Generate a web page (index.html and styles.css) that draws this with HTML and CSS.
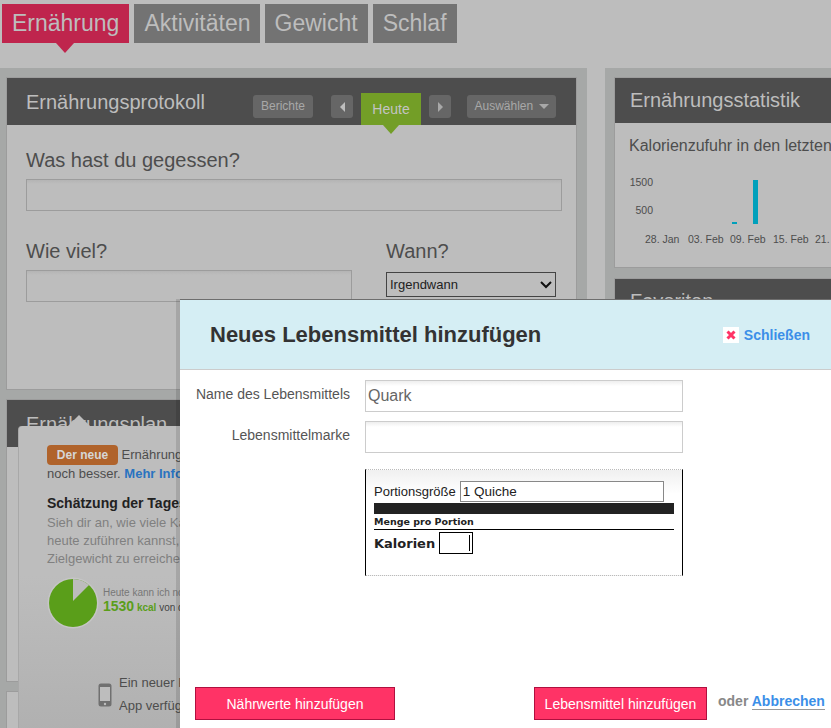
FILE: index.html
```html
<!DOCTYPE html>
<html lang="de">
<head>
    <meta charset="UTF-8">
    <meta name="viewport" content="width=device-width, initial-scale=1.0">
    <title>Neues Lebensmittel hinzufügen</title>
    <link rel="stylesheet" href="styles.css">
</head>
<body>
    <!-- Hauptnavigation -->
    <nav class="tabs">
        <a class="tab active">Ernährung</a>
        <a class="tab activities">Aktivitäten</a>
        <a class="tab">Gewicht</a>
        <a class="tab">Schlaf</a>
    </nav>

    <div class="columns">
        <div class="col-left">
            <section class="panel panel-log">
                <div class="panel-head">
                    <h2>Ernährungsprotokoll</h2>
                    <a class="head-btn reports">Berichte</a>
                    <a class="head-btn arrow-btn prev"><span class="tri-left"></span></a>
                    <a class="today">Heute</a>
                    <a class="head-btn arrow-btn next"><span class="tri-right"></span></a>
                    <a class="head-btn choose">Auswählen <span class="tri-down"></span></a>
                </div>
                <div class="panel-body">
                    <label class="big-label">Was hast du gegessen?</label>
                    <input class="dim-input" type="text">
                    <div class="log-row">
                        <div class="log-amount">
                            <label class="big-label">Wie viel?</label>
                            <input class="dim-input" type="text">
                        </div>
                        <div class="log-when">
                            <label class="big-label">Wann?</label>
                            <select class="when-select">
                                <option>Irgendwann</option>
                            </select>
                        </div>
                    </div>
                </div>
            </section>

            <section class="panel panel-plan">
                <div class="panel-head">
                    <h2>Ernährungsplan</h2>
                </div>
                <!-- Hinweis über dem Plan -->
                <div class="tip">
                    <p class="tip-intro"><span class="badge">Der neue</span> Ernährungsplan ist jetzt<br>noch besser. <a class="tip-link">Mehr Infos</a></p>
                    <h4>Schätzung der Tagesenergie</h4>
                    <p class="tip-text">Sieh dir an, wie viele Kalorien du<br>heute zuführen kannst, um dein<br>Zielgewicht zu erreichen.</p>
                    <div class="tip-pie">
                        <svg width="52" height="52" viewBox="0 0 52 52">
                            <circle cx="26" cy="26" r="25.5" fill="#c6c6c6"/>
                            <circle cx="26" cy="26" r="24" fill="#5a9e1a"/>
                            <path d="M26 24 L26 2 A24 24 0 0 1 42 8 Z" fill="#bcbcbc"/>
                        </svg>
                        <div class="pie-text">
                            <div class="pie-small">Heute kann ich noch</div>
                            <div class="pie-line"><b class="pie-num">1530</b> <b class="pie-unit">kcal</b> von deinem Ziel</div>
                        </div>
                    </div>
                    <div class="tip-app">
                        <svg width="14" height="24" viewBox="0 0 14 24">
                            <rect x="0.5" y="0.5" width="13" height="23" rx="2.5" fill="#707070"/>
                            <rect x="2" y="4" width="10" height="14" fill="#bdbdbd"/>
                            <circle cx="7" cy="21" r="1.2" fill="#bdbdbd"/>
                        </svg>
                        <p>Ein neuer Plan<br>App verfügbar</p>
                    </div>
                </div>
            </section>

            <section class="panel panel-last"></section>
        </div>

        <div class="col-right">
            <section class="panel panel-stats">
                <div class="panel-head short">
                    <h2>Ernährungsstatistik</h2>
                </div>
                <p class="stats-title">Kalorienzufuhr in den letzten 30 Tagen</p>
                <svg class="chart" width="217" height="85" viewBox="0 0 217 85">
                    <text x="38" y="22" text-anchor="end">1500</text>
                    <text x="38" y="50" text-anchor="end">500</text>
                    <rect x="117" y="58" width="5" height="2" fill="#00a0bb"/>
                    <rect x="138" y="16" width="5" height="44" fill="#00a0bb"/>
                    <text x="30" y="79">28. Jan</text>
                    <text x="73" y="79">03. Feb</text>
                    <text x="115" y="79">09. Feb</text>
                    <text x="158" y="79">15. Feb</text>
                    <text x="200" y="79">21. Feb</text>
                </svg>
            </section>
            <section class="panel panel-fav">
                <div class="panel-head short">
                    <h2>Favoriten</h2>
                </div>
            </section>
        </div>
    </div>

    <!-- Dialog -->
    <div class="dialog">
        <div class="dialog-head">
            <h1>Neues Lebensmittel hinzufügen</h1>
            <a class="close">
                <span class="close-icon">
                    <svg width="10" height="10" viewBox="0 0 10 10"><path d="M1.5 1.5 L8.5 8.5 M8.5 1.5 L1.5 8.5" stroke="#ff3366" stroke-width="3"/></svg>
                </span>
                Schließen
            </a>
        </div>
        <div class="dialog-body">
            <div class="field">
                <label>Name des Lebensmittels</label>
                <input type="text" value="Quark">
            </div>
            <div class="field">
                <label>Lebensmittelmarke</label>
                <input type="text">
            </div>
            <div class="facts">
                <div class="facts-size">
                    <label>Portionsgröße</label>
                    <input type="text" value="1 Quiche">
                </div>
                <div class="facts-bar"></div>
                <div class="facts-per">Menge pro Portion</div>
                <div class="facts-cal">
                    <label>Kalorien</label>
                    <input type="text">
                </div>
            </div>
        </div>
        <div class="dialog-foot">
            <button class="pink-btn wide">Nährwerte hinzufügen</button>
            <button class="pink-btn save">Lebensmittel hinzufügen</button>
            <span class="or">oder <a class="cancel">Abbrechen</a></span>
        </div>
    </div>
</body>
</html>
```

FILE: styles.css
```css
html, body {
    height: 728px;
    overflow: hidden;
}

body {
    margin: 0;
    background-color: #bdbdbd;
    font-family: "Liberation Sans", Arial, sans-serif;
    position: relative;
}

/* Navigation */
.tabs {
    display: flex;
    gap: 5px;
    height: 64px;
    padding: 4px 0 0 2px;
}

.tab {
    position: relative;
    height: 39px;
    line-height: 38px;
    padding: 0 10px;
    background-color: #737373;
    color: #bdbdbd;
    font-size: 23px;
}

.tab.activities {
    padding-right: 9px;
}

.tab.active {
    background-color: #bf254d;
}

.tab.active::after {
    content: "";
    position: absolute;
    left: 54px;
    top: 39px;
    border-left: 9px solid transparent;
    border-right: 9px solid transparent;
    border-top: 10px solid #bf254d;
}

/* Spalten */
.columns {
    display: flex;
    gap: 18px;
    height: 660px;
}

.col-left {
    width: 571px;
    flex-shrink: 0;
    padding: 9px 10px 0 6px;
    background-color: #a6a8a7;
}

.col-right {
    flex: 1;
    min-width: 0;
    padding: 9px 0 0 9px;
    background-color: #a6a8a7;
}

.panel {
    position: relative;
    border: 1px solid #9c9c9c;
    background-color: #bdbdbd;
    margin-bottom: 10px;
    box-sizing: border-box;
}

.panel-log {
    height: 313px;
    margin-bottom: 9px;
}

.panel-plan {
    height: 283px;
    margin-bottom: 9px;
    z-index: 1;
}

.panel-last {
    height: 80px;
}

.panel-stats {
    height: 191px;
}

.panel-fav {
    height: 120px;
}

.panel-stats,
.panel-fav {
    margin-right: -40px;
}

.panel-head {
    display: flex;
    align-items: flex-start;
    height: 47px;
    padding-left: 19px;
    background-color: #4d4d4d;
    box-sizing: border-box;
}

.panel-head.short {
    height: 45px;
    padding-left: 15px;
}

.panel-head h2 {
    margin: 0;
    padding-top: 12px;
    font-size: 20px;
    font-weight: normal;
    line-height: 24px;
    color: #bdbdbd;
    white-space: nowrap;
}

.panel-head.short h2 {
    padding-top: 10px;
}

.head-btn {
    display: block;
    height: 23px;
    margin-top: 17px;
    line-height: 23px;
    background-color: #666;
    border-radius: 3px;
    color: #a8a8a8;
    font-size: 12px;
    text-align: center;
    box-sizing: border-box;
}

.reports {
    width: 60px;
    margin-left: 48px;
}

.arrow-btn {
    display: flex;
    align-items: center;
    justify-content: center;
    width: 22px;
}

.prev {
    margin-left: 18px;
}

.next {
    margin-left: 8px;
}

.choose {
    width: 89px;
    margin-left: 16px;
}

.tri-left,
.tri-right {
    border-top: 5px solid transparent;
    border-bottom: 5px solid transparent;
}

.tri-left {
    border-right: 5px solid #bdbdbd;
}

.tri-right {
    border-left: 5px solid #a8a8a8;
}

.tri-down {
    display: inline-block;
    margin-left: 2px;
    vertical-align: 1px;
    border-left: 5px solid transparent;
    border-right: 5px solid transparent;
    border-top: 5px solid #a8a8a8;
}

.today {
    position: relative;
    width: 60px;
    height: 32px;
    margin: 15px 0 0 8px;
    line-height: 33px;
    background-color: #739e27;
    color: #c4c4c4;
    font-size: 14px;
    text-align: center;
}

.today::after {
    content: "";
    position: absolute;
    left: 22px;
    top: 32px;
    border-left: 8px solid transparent;
    border-right: 8px solid transparent;
    border-top: 9px solid #739e27;
}

.panel-body {
    padding: 23px 14px 0 19px;
}

.big-label {
    display: block;
    color: #4d4d4d;
    font-size: 20px;
    line-height: 24px;
}

.dim-input {
    display: block;
    width: 100%;
    height: 32px;
    margin-top: 7px;
    border: 1px solid #9c9c9c;
    background: linear-gradient(#b4b4b4, #bdbdbd 4px);
    box-sizing: border-box;
}

.log-row {
    display: flex;
    margin-top: 28px;
}

.log-amount {
    width: 326px;
}

.log-when {
    margin-left: 34px;
    width: 170px;
}

.when-select {
    display: block;
    width: 170px;
    height: 25px;
    margin-top: 9px;
    padding-left: 3px;
    border: 1px solid #444;
    border-radius: 0;
    appearance: none;
    background: #bdbdbd url("data:image/svg+xml,%3Csvg xmlns='http://www.w3.org/2000/svg' width='12' height='8'%3E%3Cpath d='M1 1 L6 6 L11 1' fill='none' stroke='%23111' stroke-width='2'/%3E%3C/svg%3E") no-repeat right 3px center;
    color: #222;
    font-family: "Liberation Sans", Arial, sans-serif;
    font-size: 13px;
}

/* Hinweis */
.tip {
    position: absolute;
    left: 11px;
    top: 26px;
    width: 540px;
    height: 320px;
    padding: 19px 0 0 28px;
    border-radius: 4px 0 0 0;
    border-left: 1px solid #a8a8a8;
    background: linear-gradient(#bdbdbd, #bdbdbd 150px, #afafaf);
    box-sizing: border-box;
    color: #4d4d4d;
    font-size: 13px;
}

.tip::before {
    content: "";
    position: absolute;
    left: 49px;
    top: -11px;
    border-left: 11px solid transparent;
    border-right: 11px solid transparent;
    border-bottom: 11px solid #bdbdbd;
}

.tip-intro {
    margin: 0;
    line-height: 17px;
    white-space: nowrap;
}

.badge {
    display: inline-block;
    width: 71px;
    height: 20px;
    line-height: 20px;
    border-radius: 4px;
    background-color: #b0632b;
    color: #d6d6d6;
    font-size: 12px;
    font-weight: bold;
    text-align: center;
}

.tip-link {
    color: #2a73c0;
    font-weight: bold;
}

.tip h4 {
    margin: 12px 0 0;
    color: #222;
    font-size: 14px;
    line-height: 18px;
}

.tip-text {
    margin: 2px 0 0;
    color: #808080;
    line-height: 18px;
    white-space: nowrap;
}

.tip-pie {
    display: flex;
    align-items: flex-start;
    gap: 4px;
    margin-top: 9px;
}

.pie-text {
    padding-top: 10px;
    white-space: nowrap;
}

.pie-small {
    color: #777;
    font-size: 10px;
    line-height: 12px;
}

.pie-line {
    color: #444;
    font-size: 10px;
    line-height: 14px;
}

.pie-num {
    color: #5a9e1a;
    font-size: 14px;
}

.pie-unit {
    color: #5a9e1a;
}

.tip-app {
    display: flex;
    gap: 7px;
    margin: 42px 0 0 51px;
}

.tip-app svg {
    margin-top: 12px;
}

.tip-app p {
    width: 70px;
    margin: 0;
    line-height: 23px;
    overflow: hidden;
    white-space: nowrap;
}

/* Statistik */
.stats-title {
    margin: 13px 0 0 14px;
    color: #4d4d4d;
    font-size: 16px;
    line-height: 20px;
    white-space: nowrap;
}

.chart {
    display: block;
    margin: 8px 0 0 0;
    overflow: visible;
}

.chart text {
    fill: #4d4d4d;
    font-size: 10.5px;
}

/* Dialog */
.dialog {
    position: absolute;
    left: 180px;
    right: 0;
    top: 299px;
    bottom: 0;
    z-index: 2;
    display: flex;
    flex-direction: column;
    border-top: 1px solid #6e6e6e;
    background-color: #fff;
    box-shadow: -4px 0 0 rgba(0, 0, 0, 0.12);
}

.dialog-head {
    display: flex;
    align-items: center;
    justify-content: space-between;
    height: 70px;
    padding: 0 21px 0 30px;
    border-bottom: 1px solid #ccc;
    background-color: #d5eef4;
    box-sizing: border-box;
}

.dialog-head h1 {
    margin: 0;
    color: #333;
    font-size: 22px;
}

.close {
    display: flex;
    align-items: center;
    gap: 5px;
    color: #3b8fe8;
    font-size: 14px;
    font-weight: bold;
}

.close-icon {
    display: flex;
    align-items: center;
    justify-content: center;
    width: 16px;
    height: 16px;
    background-color: #fff;
}

.dialog-body {
    flex: 1;
    padding-top: 10px;
}

.field {
    display: flex;
    margin-bottom: 9px;
}

.field label {
    width: 170px;
    padding-top: 6px;
    color: #555;
    font-size: 14px;
    line-height: 16px;
    text-align: right;
}

.field input {
    width: 318px;
    height: 32px;
    margin-left: 15px;
    padding: 0 2px;
    border: 1px solid #ccc;
    background: linear-gradient(#eee, #fff 5px);
    box-sizing: border-box;
    color: #666;
    font-family: "Liberation Sans", Arial, sans-serif;
    font-size: 16px;
}

.facts {
    width: 318px;
    height: 107px;
    margin: 16px 0 0 185px;
    padding: 11px 8px 0 8px;
    border-left: 1px solid #000;
    border-right: 1px solid #000;
    border-top: 1px dotted #bbb;
    border-bottom: 1px dotted #bbb;
    background: linear-gradient(#f0f0f0, #fff 24px);
    box-sizing: border-box;
}

.facts-size {
    display: flex;
    align-items: center;
    gap: 4px;
    color: #222;
    font-size: 13px;
}

.facts-size input {
    width: 204px;
    height: 21px;
    padding: 0 2px;
    border: 1px solid #888;
    background-color: #fff;
    box-sizing: border-box;
    color: #222;
    font-family: "Liberation Sans", Arial, sans-serif;
    font-size: 13.5px;
}

.facts-bar {
    height: 11px;
    margin-top: 1px;
    background-color: #222;
}

.facts-per {
    height: 14px;
    padding-top: 1px;
    border-bottom: 1px solid #000;
    color: #222;
    font-family: "DejaVu Sans", sans-serif;
    font-size: 9.5px;
    font-weight: bold;
    line-height: 14px;
}

.facts-cal {
    display: flex;
    align-items: center;
    gap: 4px;
    margin-top: 2px;
    color: #222;
    font-family: "DejaVu Sans", sans-serif;
    font-size: 13px;
    font-weight: bold;
}

.facts-cal input {
    width: 34px;
    height: 22px;
    padding: 0;
    border: 1px solid #000;
    background: #fff linear-gradient(#000, #000) no-repeat right 2px center / 1px 16px;
    box-sizing: border-box;
}

.dialog-foot {
    display: flex;
    align-items: flex-start;
    height: 41px;
    padding-left: 15px;
    white-space: nowrap;
}

.pink-btn {
    height: 33px;
    border: 1px solid #b0103f;
    background-color: #ff3366;
    color: #fff;
    font-family: "Liberation Sans", Arial, sans-serif;
    font-size: 14px;
    box-sizing: border-box;
}

.wide {
    width: 200px;
}

.save {
    width: 173px;
    margin-left: 139px;
}

.or {
    margin-left: 11px;
    color: #888;
    font-size: 14px;
    font-weight: bold;
    line-height: 28px;
}

.cancel {
    color: #3b8fe8;
    border-bottom: 1px solid #999;
}
```
